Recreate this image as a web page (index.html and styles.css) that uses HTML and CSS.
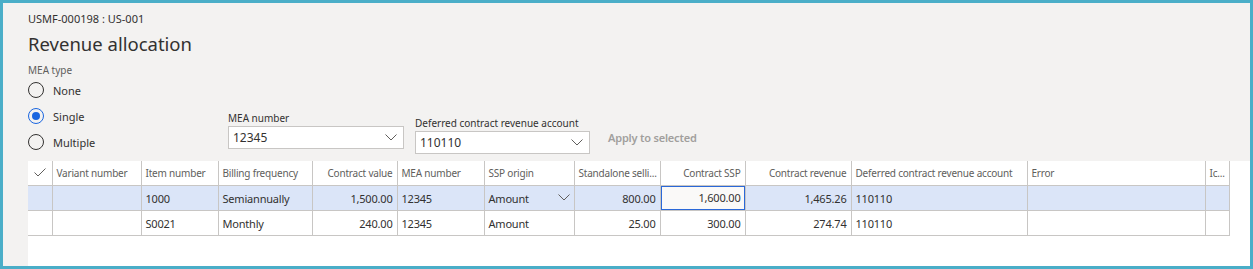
FILE: index.html
```html
<!DOCTYPE html>
<html lang="en">

<head>
    <meta charset="UTF-8">
    <title>Revenue allocation</title>
    <link rel="stylesheet" href="styles.css">
</head>

<body>

    <div class="frame">
        <!-- header -->
        <div class="top">
            <div class="caption">USMF-000198 : US-001</div>
            <h1>Revenue allocation</h1>

            <div class="options">
                <div class="mea-type">
                    <div class="group-label">MEA type</div>
                    <label class="radio"><span class="dot"></span>None</label>
                    <label class="radio checked"><span class="dot"></span>Single</label>
                    <label class="radio"><span class="dot"></span>Multiple</label>
                </div>

                <div class="field field-mea">
                    <div class="field-label">MEA number</div>
                    <div class="combo">
                        <span>12345</span>
                        <svg width="12" height="7" viewBox="0 0 12 7"><path d="M0.5 0.5 L6 6 L11.5 0.5" fill="none" stroke="#605e5c" stroke-width="1"/></svg>
                    </div>
                </div>

                <div class="field field-account">
                    <div class="field-label">Deferred contract revenue account</div>
                    <div class="combo">
                        <span>110110</span>
                        <svg width="12" height="7" viewBox="0 0 12 7"><path d="M0.5 0.5 L6 6 L11.5 0.5" fill="none" stroke="#605e5c" stroke-width="1"/></svg>
                    </div>
                </div>

                <div class="apply">Apply to selected</div>
            </div>
        </div>

        <!-- grid -->
        <div class="grid-panel">
            <table class="grid">
                <colgroup>
                    <col style="width:24px">
                    <col style="width:89px">
                    <col style="width:77px">
                    <col style="width:94px">
                    <col style="width:85px">
                    <col style="width:87px">
                    <col style="width:90px">
                    <col style="width:86px">
                    <col style="width:85px">
                    <col style="width:106px">
                    <col style="width:176px">
                    <col style="width:178px">
                    <col style="width:24px">
                </colgroup>
                <thead>
                    <tr>
                        <th class="check"><svg width="12" height="9" viewBox="0 0 12 9"><path d="M0.5 4.5 L4 8 L11.5 0.5" fill="none" stroke="#605e5c" stroke-width="1"/></svg></th>
                        <th>Variant number</th>
                        <th>Item number</th>
                        <th>Billing frequency</th>
                        <th class="num">Contract value</th>
                        <th>MEA number</th>
                        <th>SSP origin</th>
                        <th>Standalone selli...</th>
                        <th class="num">Contract SSP</th>
                        <th class="num">Contract revenue</th>
                        <th>Deferred contract revenue account</th>
                        <th>Error</th>
                        <th>Ic...</th>
                    </tr>
                </thead>
                <tbody>
                    <tr class="selected">
                        <td></td>
                        <td></td>
                        <td>1000</td>
                        <td>Semiannually</td>
                        <td class="num">1,500.00</td>
                        <td>12345</td>
                        <td class="has-drop">Amount<svg width="12" height="7" viewBox="0 0 12 7"><path d="M0.5 0.5 L6 6 L11.5 0.5" fill="none" stroke="#605e5c" stroke-width="1"/></svg></td>
                        <td class="num">800.00</td>
                        <td class="num focus"><div class="edit">1,600.00</div></td>
                        <td class="num">1,465.26</td>
                        <td>110110</td>
                        <td></td>
                        <td></td>
                    </tr>
                    <tr>
                        <td></td>
                        <td></td>
                        <td>S0021</td>
                        <td>Monthly</td>
                        <td class="num">240.00</td>
                        <td>12345</td>
                        <td>Amount</td>
                        <td class="num">25.00</td>
                        <td class="num">300.00</td>
                        <td class="num">274.74</td>
                        <td>110110</td>
                        <td></td>
                        <td></td>
                    </tr>
                </tbody>
            </table>
        </div>
    </div>

</body>

</html>
```

FILE: styles.css
```css
body {
    margin: 0;
    padding: 0;
    font-family: "Noto Sans", "Open Sans", Arial, sans-serif;
    color: #323130;
}

.frame {
    width: 1253px;
    height: 269px;
    box-sizing: border-box;
    border: 3px solid #4aaec8;
    background-color: #f3f2f1;
    display: flex;
    flex-direction: column;
}

.top {
    padding: 8px 0 0 25px;
    height: 150px;
    box-sizing: border-box;
}

.caption {
    font-size: 11px;
    line-height: 16px;
    color: #323130;
}

h1 {
    margin: 5px 0 0 0;
    font-size: 18.5px;
    font-weight: 400;
    line-height: 24px;
    color: #323130;
}

.options {
    display: flex;
    align-items: flex-start;
}

.mea-type {
    width: 200px;
    padding-top: 7px;
}

.group-label {
    font-size: 10px;
    line-height: 14px;
    color: #605e5c;
}

.radio {
    display: flex;
    align-items: center;
    height: 26px;
    font-size: 11px;
    color: #323130;
}

.radio .dot {
    width: 14px;
    height: 14px;
    border: 1px solid #323130;
    border-radius: 50%;
    margin-right: 9px;
    box-sizing: content-box;
    position: relative;
}

.radio.checked .dot {
    border-color: #1a66e0;
}

.radio.checked .dot::after {
    content: "";
    position: absolute;
    left: 3px;
    top: 3px;
    width: 8px;
    height: 8px;
    border-radius: 50%;
    background-color: #1a66e0;
}

.field {
    margin-right: 11px;
}

.field-mea {
    margin-top: 56px;
}

.field-account {
    margin-top: 61px;
}

.field-label {
    font-size: 10px;
    line-height: 13px;
    color: #323130;
    margin-bottom: 1px;
}

.combo {
    width: 176px;
    height: 23px;
    box-sizing: border-box;
    background-color: #fff;
    border: 1px solid #c8c6c4;
    display: flex;
    align-items: center;
    justify-content: space-between;
    padding: 0 6px 0 4px;
    font-size: 12px;
}

.field-account .combo {
    width: 175px;
}

.apply {
    margin-top: 74px;
    margin-left: 7px;
    font-size: 11px;
    font-weight: 600;
    letter-spacing: -0.2px;
    color: #a19f9d;
}

.grid-panel {
    flex: 1;
    margin-left: 25px;
    margin-top: 8px;
    background-color: #fff;
}

.grid {
    border-collapse: collapse;
    table-layout: fixed;
    width: 1201px;
    font-size: 11px;
}

.grid th,
.grid td {
    height: 24px;
    padding: 0 4px;
    border-left: 1px solid #c8c6c4;
    border-bottom: 1px solid #c8c6c4;
    white-space: nowrap;
    overflow: hidden;
    text-align: left;
}

.grid th:first-child,
.grid td:first-child {
    border-left: none;
}

.grid th:last-child,
.grid td:last-child {
    border-right: 1px solid #c8c6c4;
}

.grid th {
    font-weight: 400;
    font-size: 10px;
    letter-spacing: -0.2px;
    color: #605e5c;
}

.grid th.check {
    text-align: center;
    padding: 0;
}

.grid .num {
    text-align: right;
}

.grid td {
    font-size: 11px;
    letter-spacing: -0.2px;
    color: #323130;
}

.grid tr.selected td {
    background-color: #dbe5f8;
}

.grid td.has-drop svg {
    float: right;
    margin-top: 3px;
}

.grid td.focus {
    padding: 0;
}

.grid td.focus .edit {
    height: 24px;
    line-height: 22px;
    box-sizing: border-box;
    border: 1px solid #2a68d8;
    background-color: #faf9f8;
    padding-right: 3px;
}
```
